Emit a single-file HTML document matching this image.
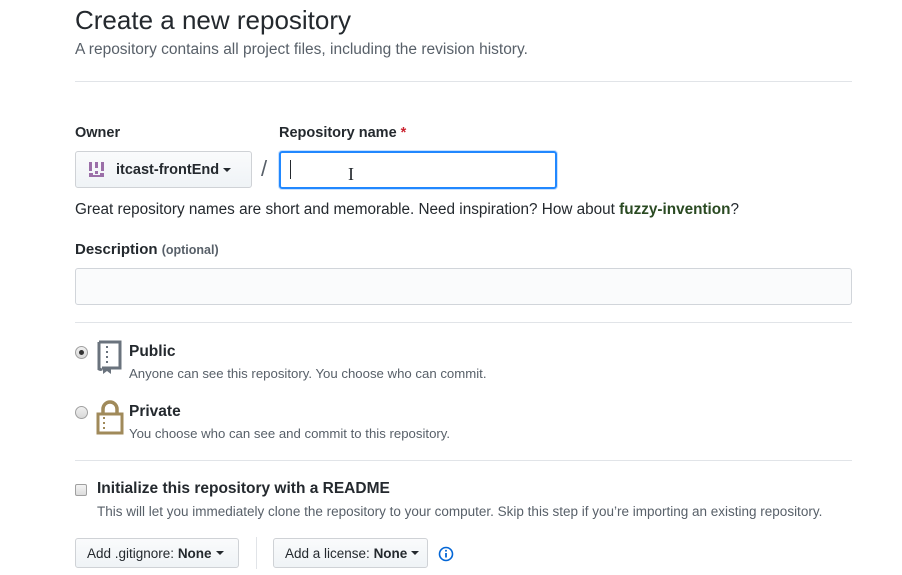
<!DOCTYPE html>
<html><head><meta charset="utf-8"><style>
body{margin:0;width:902px;height:575px;background:#fff;font-family:"Liberation Sans",sans-serif;color:#24292e;position:relative;overflow:hidden}
.a{position:absolute;white-space:nowrap}
.line{position:absolute;left:75px;width:777px;height:1px;background:#e1e4e8}
.btn{position:absolute;border:1px solid #cfd2d6;border-radius:3px;background:linear-gradient(#fafbfc,#eff3f6);box-sizing:border-box;font-size:13.5px;display:flex;align-items:center;padding-left:11px}
.caret{display:inline-block;width:0;height:0;border-left:4px solid transparent;border-right:4px solid transparent;border-top:4px solid #24292e;margin-left:4px;vertical-align:middle}
.radio{position:absolute;width:11px;height:11px;border:1px solid #a0a0a0;border-radius:50%;background:linear-gradient(#f0f0f0,#d8d8d8)}
</style></head><body>
<div class="a" style="left:75px;top:5px;font-size:26px;color:#24292e">Create a new repository</div>
<div class="a" style="left:75px;top:41px;font-size:15.5px;color:#586069">A repository contains all project files, including the revision history.</div>
<div class="line" style="top:81px"></div>

<div class="a" style="left:75px;top:125px;font-size:14.5px;font-weight:bold">Owner</div>
<div class="a" style="left:279px;top:125px;font-size:14.5px;font-weight:bold">Repository name <span style="color:#cb2431">*</span></div>
<div class="btn" style="left:75px;top:151px;width:177px;height:37px;font-size:14.5px;font-weight:bold">
<svg width="20" height="20" viewBox="0 0 20 20" style="margin-right:9px"><g fill="#9b6fa8"><rect x="2" y="2" width="3" height="9"/><rect x="8" y="2" width="3" height="6"/><rect x="14" y="2" width="3" height="9"/><rect x="2" y="13" width="4" height="4"/><rect x="8" y="11" width="3" height="3"/><rect x="13" y="13" width="4" height="4"/><rect x="6" y="15" width="7" height="2"/></g></svg>itcast-frontEnd<span class="caret"></span></div>
<div class="a" style="left:261px;top:156px;font-size:22px;color:#586069">/</div>
<div class="a" style="left:279px;top:151px;width:278px;height:38px;box-sizing:border-box;border:2px solid #2188ff;border-radius:3px;box-shadow:0 0 0 1px #c8e1ff"></div>
<div class="a" style="left:290px;top:160px;width:1px;height:19px;background:#24292e"></div>
<div class="a" style="left:348px;top:164px;font-size:18px;font-family:'Liberation Serif',serif">I</div>
<div class="a" style="left:75px;top:201px;font-size:15.3px">Great repository names are short and memorable. Need inspiration? How about <b style="color:#2a4a22">fuzzy-invention</b>?</div>

<div class="a" style="left:75px;top:241px;font-size:15px;font-weight:bold">Description <span style="font-size:12.5px;font-weight:bold;color:#586069">(optional)</span></div>
<div class="a" style="left:75px;top:268px;width:777px;height:37px;box-sizing:border-box;border:1px solid #d1d5da;border-radius:3px;background:#fafbfc"></div>
<div class="line" style="top:322px"></div>

<div class="radio" style="left:75px;top:346px"><div style="position:absolute;left:3px;top:3px;width:5px;height:5px;border-radius:50%;background:#333"></div></div>
<svg class="a" style="left:96px;top:340px" width="28" height="34" viewBox="0 0 28 34"><path d="M3 2h21v26H6M3 2v27a3 3 0 0 0 3 0" fill="none" stroke="#6a737d" stroke-width="3"/><rect x="10" y="6" width="2" height="2" fill="#6a737d"/><rect x="10" y="11" width="2" height="2" fill="#6a737d"/><rect x="10" y="16" width="2" height="2" fill="#6a737d"/><rect x="10" y="21" width="2" height="2" fill="#6a737d"/><path d="M7 28h8v6l-4-3-4 3z" fill="#6a737d"/></svg>
<div class="a" style="left:129px;top:343px;font-size:15.5px;font-weight:bold">Public</div>
<div class="a" style="left:129px;top:366px;font-size:13.2px;color:#586069">Anyone can see this repository. You choose who can commit.</div>

<div class="radio" style="left:75px;top:406px"></div>
<svg class="a" style="left:96px;top:399px" width="28" height="36" viewBox="0 0 28 36"><path d="M7 15V10a7 7 0 0 1 14 0v5" fill="none" stroke="#a08a5a" stroke-width="3.5"/><rect x="2" y="15" width="24" height="19" fill="none" stroke="#a08a5a" stroke-width="3"/><rect x="7" y="18" width="2" height="2" fill="#a08a5a"/><rect x="7" y="23" width="2" height="2" fill="#a08a5a"/><rect x="7" y="28" width="2" height="2" fill="#a08a5a"/></svg>
<div class="a" style="left:129px;top:403px;font-size:15.5px;font-weight:bold">Private</div>
<div class="a" style="left:129px;top:426px;font-size:13.2px;color:#586069">You choose who can see and commit to this repository.</div>
<div class="line" style="top:460px"></div>

<div class="a" style="left:75px;top:484px;width:12px;height:12px;box-sizing:border-box;border:1px solid #a0a0a0;border-radius:2px;background:linear-gradient(#f4f4f4,#dcdcdc)"></div>
<div class="a" style="left:97px;top:480px;font-size:15.5px;font-weight:bold">Initialize this repository with a README</div>
<div class="a" style="left:97px;top:504px;font-size:13.5px;color:#586069">This will let you immediately clone the repository to your computer. Skip this step if you’re importing an existing repository.</div>

<div class="btn" style="left:75px;top:538px;width:164px;height:30px">Add .gitignore:&nbsp;<b>None</b><span class="caret"></span></div>
<div class="a" style="left:256px;top:537px;width:1px;height:32px;background:#e1e4e8"></div>
<div class="btn" style="left:273px;top:538px;width:155px;height:30px">Add a license:&nbsp;<b>None</b><span class="caret"></span></div>
<svg class="a" style="left:438px;top:546px" width="16" height="16" viewBox="0 0 16 16"><circle cx="8" cy="8" r="6.5" fill="none" stroke="#0366d6" stroke-width="1.6"/><rect x="7.1" y="7" width="1.8" height="4.5" fill="#0366d6"/><circle cx="8" cy="4.8" r="1" fill="#0366d6"/></svg>
</body></html>
